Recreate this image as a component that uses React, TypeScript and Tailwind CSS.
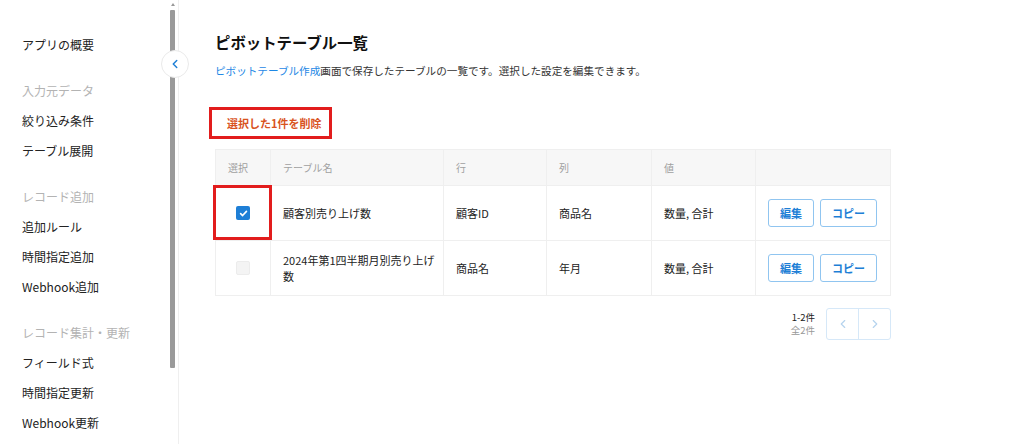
import { ChevronLeft, ChevronRight } from 'lucide-react';

const font = { fontFamily: '"Noto Sans CJK JP", "Noto Sans", sans-serif' };

type NavItem = { label: string; group?: boolean };

const nav: NavItem[] = [
    { label: 'アプリの概要' },
    { label: '入力元データ', group: true },
    { label: '絞り込み条件' },
    { label: 'テーブル展開' },
    { label: 'レコード追加', group: true },
    { label: '追加ルール' },
    { label: '時間指定追加' },
    { label: 'Webhook追加' },
    { label: 'レコード集計・更新', group: true },
    { label: 'フィールド式' },
    { label: '時間指定更新' },
    { label: 'Webhook更新' },
];

const rows = [
    { checked: true, name: '顧客別売り上げ数', row: '顧客ID', col: '商品名', value: '数量, 合計' },
    { checked: false, name: '2024年第1四半期月別売り上げ数', row: '商品名', col: '年月', value: '数量, 合計' },
];

function Sidebar() {
    return (
        <aside className="relative w-[179px] shrink-0 h-[444px] border-r border-[#efefef] bg-white">
            <ul className="pt-[30px] pl-[22px]">
                {nav.map((item) => (
                    <li
                        key={item.label}
                        className={
                            item.group
                                ? 'h-[30px] leading-[30px] text-[12px] text-[#b3b3b3] mt-[16px]'
                                : 'h-[30px] leading-[30px] text-[12px] text-[#222]'
                        }
                    >
                        {item.label}
                    </li>
                ))}
            </ul>

            {/* fake scrollbar */}
            <div className="absolute right-[2px] top-0 bottom-0 w-[6px]">
                <div className="absolute left-[1px] top-[3px] w-0 h-0 border-l-[2px] border-r-[2px] border-b-[3px] border-l-transparent border-r-transparent border-b-[#999]" />
                <div className="absolute left-0 top-[10px] h-[358px] w-[5px] bg-[#9a9a9a] rounded-[1px]" />
            </div>

            <button className="absolute left-[161px] top-[50px] w-[28px] h-[28px] rounded-full bg-white border border-[#eaeaea] flex items-center justify-center">
                <ChevronLeft size={14} strokeWidth={2.5} className="text-[#1e7fd6]" />
            </button>
        </aside>
    );
}

export default function App() {
    return (
        <div className="flex w-[1024px] h-[444px] overflow-hidden bg-white text-[#222]" style={font}>
            <Sidebar />

            <main className="flex-1 pl-[36px] pr-[134px] pt-[30px]">
                <h1 className="text-[15.4px] font-bold leading-[24px] text-[#111]">ピボットテーブル一覧</h1>
                <p className="mt-[9px] text-[10.6px] leading-[16px] text-[#333]">
                    <span className="text-[#1e88e5]">ピボットテーブル作成</span>
                    画面で保存したテーブルの一覧です。選択した設定を編集できます。
                </p>

                <div className="mt-[28px] -ml-[6px] w-[123px] h-[32px] border-[3px] border-[#e21d1d] flex items-center pl-[15px]">
                    <span className="text-[11px] font-bold text-[#d9531e]">選択した1件を削除</span>
                </div>

                <table className="mt-[10px] w-[675px] border-collapse text-[11px] table-fixed">
                    <colgroup>
                        <col className="w-[55px]" />
                        <col className="w-[173px]" />
                        <col className="w-[103px]" />
                        <col className="w-[105px]" />
                        <col className="w-[104px]" />
                        <col className="w-[135px]" />
                    </colgroup>
                    <thead>
                        <tr className="h-[36px] bg-[#f7f7f7] text-[10px] text-[#a0a0a0] text-left">
                            <th className="font-normal pl-[12px] border border-[#efefef]">選択</th>
                            <th className="font-normal pl-[12px] border border-[#efefef]">テーブル名</th>
                            <th className="font-normal pl-[12px] border border-[#efefef]">行</th>
                            <th className="font-normal pl-[12px] border border-[#efefef]">列</th>
                            <th className="font-normal pl-[12px] border border-[#efefef]">値</th>
                            <th className="border border-[#efefef]" />
                        </tr>
                    </thead>
                    <tbody>
                        {rows.map((r) => (
                            <tr key={r.name} className="h-[55px]">
                                <td className="relative border border-[#efefef]">
                                    {r.checked && (
                                        <div className="absolute -left-[3px] -top-px w-[59px] h-[55px] border-[3px] border-[#e21d1d]" />
                                    )}
                                    <div className="flex justify-center">
                                        {r.checked ? (
                                            <span className="w-[14px] h-[14px] rounded-[2px] bg-[#1e7fd6] flex items-center justify-center">
                                                <svg width="9" height="9" viewBox="0 0 10 10">
                                                    <path d="M1.8 5.2 L4 7.3 L8.3 2.6" fill="none" stroke="white" strokeWidth="1.8" strokeLinecap="round" strokeLinejoin="round" />
                                                </svg>
                                            </span>
                                        ) : (
                                            <span className="w-[14px] h-[14px] rounded-[2px] bg-[#f4f4f4] border border-[#ececec]" />
                                        )}
                                    </div>
                                </td>
                                <td className="pl-[12px] pr-[2px] leading-[16px] border border-[#efefef]">{r.name}</td>
                                <td className="pl-[12px] border border-[#efefef]">{r.row}</td>
                                <td className="pl-[12px] border border-[#efefef]">{r.col}</td>
                                <td className="pl-[12px] border border-[#efefef]">{r.value}</td>
                                <td className="pl-[12px] border border-[#efefef]">
                                    <div className="flex gap-[6px]">
                                        <button className="w-[46px] h-[28px] rounded-[3px] border border-[#90c5f0] text-[11px] font-bold text-[#1e7fd6]">編集</button>
                                        <button className="w-[57px] h-[28px] rounded-[3px] border border-[#90c5f0] text-[11px] font-bold text-[#1e7fd6]">コピー</button>
                                    </div>
                                </td>
                            </tr>
                        ))}
                    </tbody>
                </table>

                <div className="mt-[12px] flex justify-end items-center gap-[11px]">
                    <div className="flex flex-col items-end text-[9.5px] leading-[13px]">
                        <span className="text-[#222]">1-2件</span>
                        <span className="text-[#999]">全2件</span>
                    </div>
                    <div className="flex h-[32px] border border-[#d6e8f8] rounded-[3px]">
                        <button className="w-[32px] flex items-center justify-center border-r border-[#d6e8f8]">
                            <ChevronLeft size={14} className="text-[#b5d3ee]" />
                        </button>
                        <button className="w-[31px] flex items-center justify-center">
                            <ChevronRight size={14} className="text-[#b5d3ee]" />
                        </button>
                    </div>
                </div>
            </main>
        </div>
    );
}
